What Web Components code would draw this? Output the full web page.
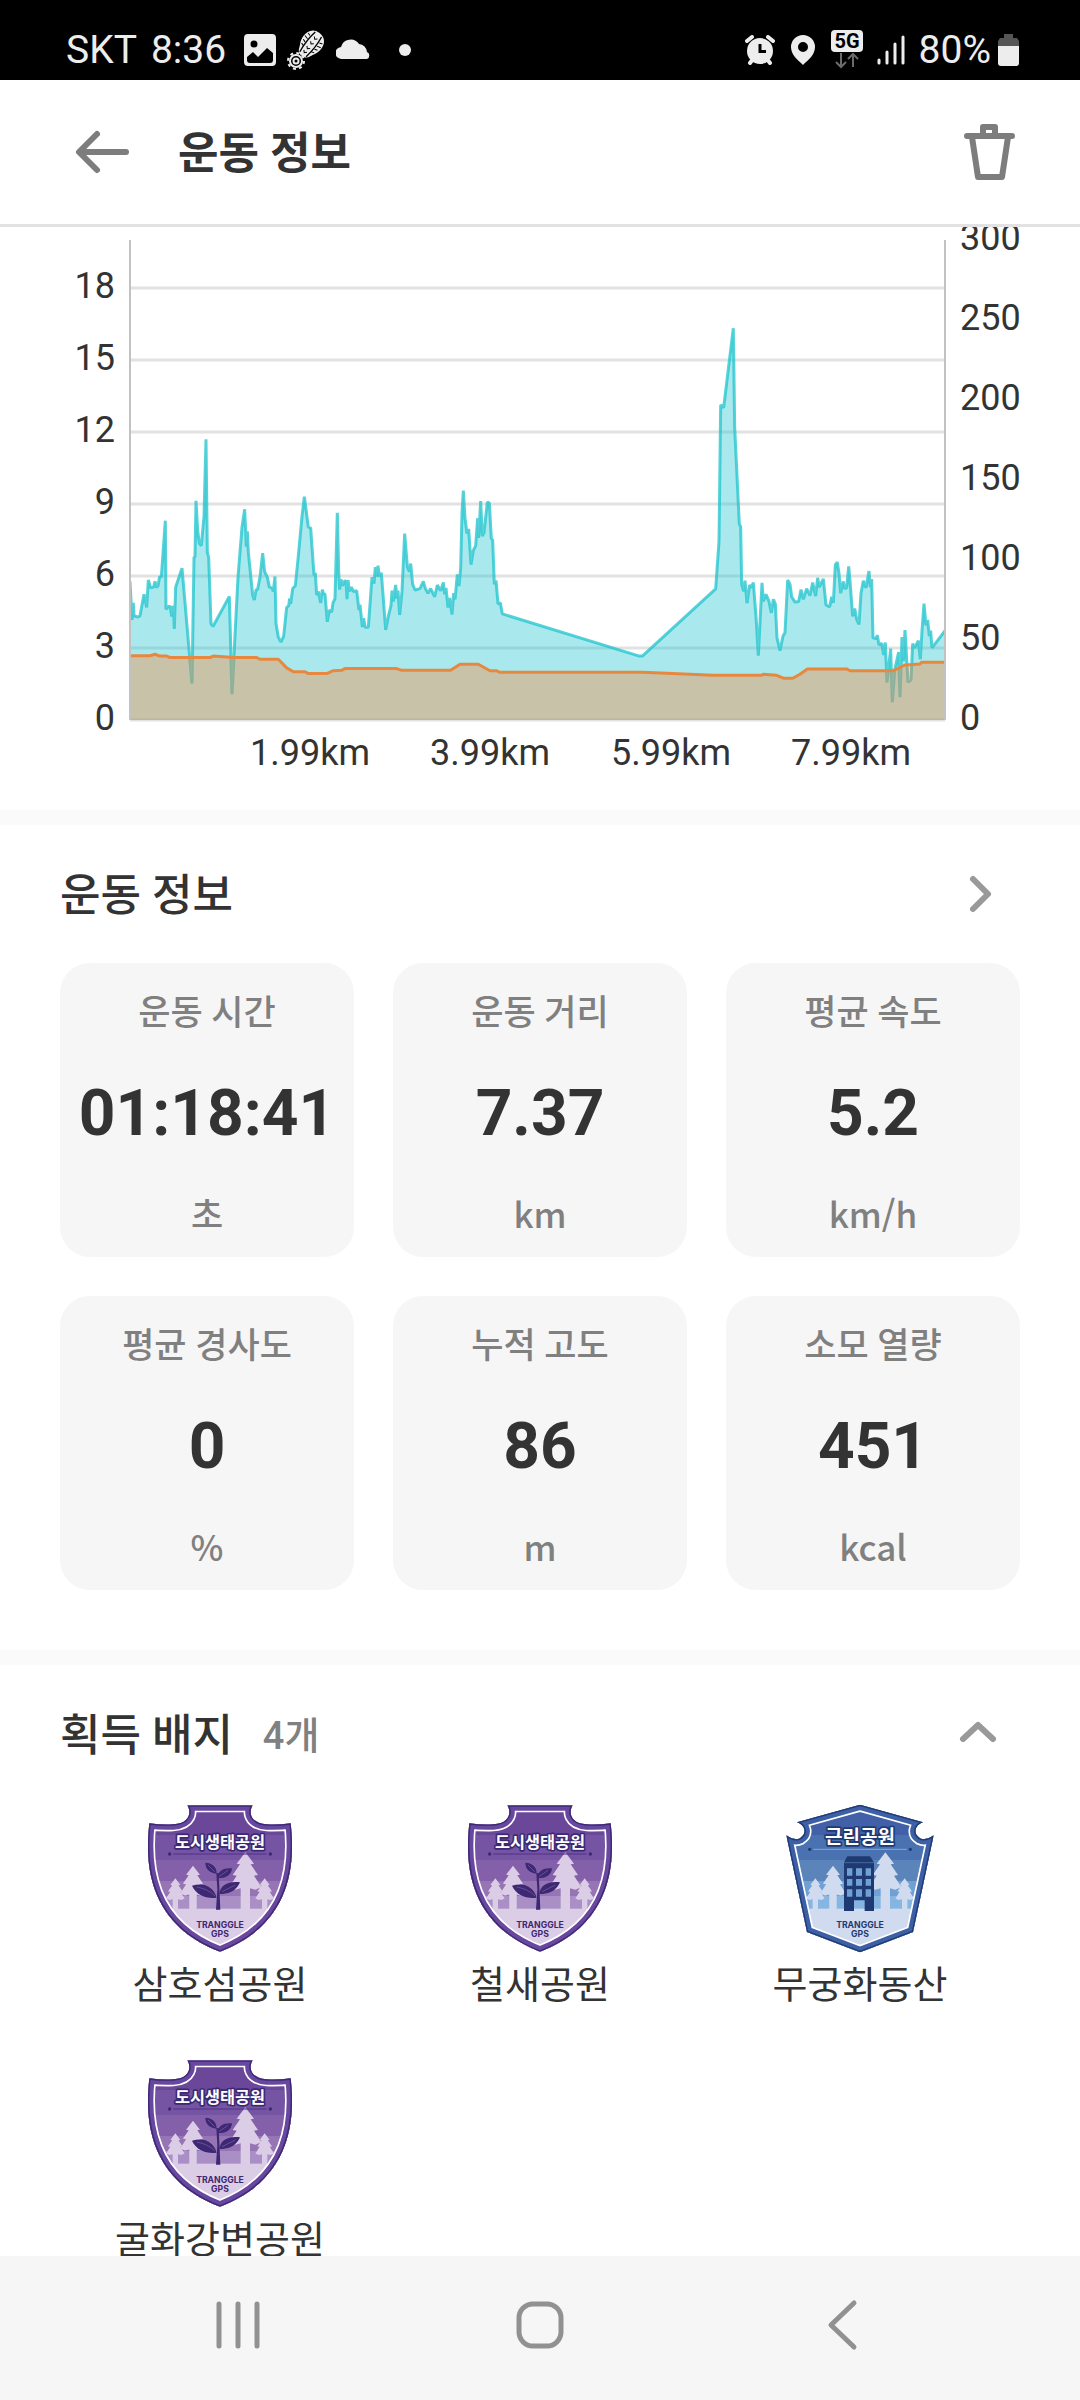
<!DOCTYPE html>
<html lang="ko">
<head>
<meta charset="utf-8">
<meta name="viewport" content="width=device-width, initial-scale=1">
<title>운동 정보</title>
<style>
    :root {
        --ink: #333;
        --muted: #808080;
        --panel: #f6f6f6;
        --divider: #fafafa;
        --line: #e2e2e2;
        --gutter: 60px;
    }
    body {
        margin: 0;
        background: white;
        color: var(--ink);
        font-family: Roboto, "Noto Sans CJK KR", sans-serif;
    }
</style>
</head>
<body>
<app-screen>
    <status-bar slot="top" carrier="SKT" time="8:36" battery="80"></status-bar>
    <title-bar slot="top">운동 정보</title-bar>

    <workout-chart></workout-chart>

    <info-section>
        <span slot="title">운동 정보</span>
        <icon-button slot="action" name="next" label="운동 정보 더보기"></icon-button>
        <stat-grid>
            <stat-card label="운동 시간" unit="초">01:18:41</stat-card>
            <stat-card label="운동 거리" unit="km">7.37</stat-card>
            <stat-card label="평균 속도" unit="km/h">5.2</stat-card>
            <stat-card label="평균 경사도" unit="%">0</stat-card>
            <stat-card label="누적 고도" unit="m">86</stat-card>
            <stat-card label="소모 열량" unit="kcal">451</stat-card>
        </stat-grid>
    </info-section>

    <info-section>
        <span slot="title">획득 배지</span>
        <span slot="count">4개</span>
        <icon-button slot="action" name="fold" label="획득 배지 접기"></icon-button>
        <badge-list>
            <park-badge type="eco">삼호섬공원</park-badge>
            <park-badge type="eco">철새공원</park-badge>
            <park-badge type="town">무궁화동산</park-badge>
            <park-badge type="eco">굴화강변공원</park-badge>
        </badge-list>
    </info-section>

    <nav-bar slot="bottom"></nav-bar>
</app-screen>

<script>
class AppScreen extends HTMLElement {
    constructor() {
        super();

        this.attachShadow({mode: 'open'}).innerHTML = `
            <style>
                :host {
                    display: flex;
                    flex-direction: column;
                    height: 100vh;
                }
                header, footer {
                    flex: none;
                }
                main {
                    flex: 1;
                    min-height: 0;
                    overflow: hidden;
                }
            </style>
            <header><slot name="top"></slot></header>
            <main><slot></slot></main>
            <footer><slot name="bottom"></slot></footer>
        `;
    }
}

class StatusBar extends HTMLElement {
    constructor() {
        super();

        this.attachShadow({mode: 'open'}).innerHTML = `
            <style>
                :host {
                    display: flex;
                    justify-content: space-between;
                    box-sizing: border-box;
                    height: 80px;
                    padding: 20px 61px 0 66px;
                    background: black;
                    color: #ededed;
                    font-size: 39px;
                    line-height: 60px;
                }
                div {
                    display: flex;
                    align-items: center;
                }
                svg {
                    display: block;
                    fill: #ededed;
                }
                .time {
                    margin: 0 18px 0 14px;
                }
                .left svg + svg {
                    margin-left: 11px;
                }
                .left svg:last-child {
                    margin-left: 27px;
                }
                .right svg {
                    margin-right: 14px;
                }
                .right svg:last-child {
                    margin: 0 0 0 7px;
                }
            </style>
            <div class="left">
                <span>${this.getAttribute('carrier')}</span>
                <span class="time">${this.getAttribute('time')}</span>
                <svg width="32" height="32" viewBox="0 0 32 32">
                    <path fill-rule="evenodd" d="M4 0h24a4 4 0 0 1 4 4v24a4 4 0 0 1-4 4H4a4 4 0 0 1-4-4V4a4 4 0 0 1 4-4zM3 23v3a3 3 0 0 0 3 3h20a3 3 0 0 0 3-3v-7l-6-5-9 9-5-5zM10 6.500a3.500 3.500 0 1 0 0 7 3.500 3.500 0 0 0 0-7z"/>
                </svg>
                <svg width="38" height="40" viewBox="0 0 38 40">
                    <g transform="rotate(38 24 14)">
                        <path d="M24 0c8 0 11 6 11 12s-3 9-4 12-3 5-7 5-6-2-7-5-4-6-4-12 3-12 11-12z"/>
                        <path d="M20 2q-2 12 0 25M28 2q2 12 0 25" fill="none" stroke="#000" stroke-width="1.400"/>
                        <path d="M15 7l3 1M14 11l4 1M15 15l3 1M16 19l3 1M33 7l-3 1M34 11l-4 1M33 15l-3 1M32 19l-3 1M22 6l2 2 2-2M22 12l2 2 2-2M22 18l2 2 2-2M22 23l2 2 2-2" fill="none" stroke="#000"/>
                    </g>
                    <circle cx="9" cy="31" r="6" fill="none" stroke="#ededed" stroke-width="2"/>
                    <circle cx="9" cy="31" r="8" fill="none" stroke="#ededed" stroke-width="2" stroke-dasharray="3 3.300"/>
                    <circle cx="9" cy="31" r="2.500" fill="none" stroke="#ededed" stroke-width="2"/>
                </svg>
                <svg width="36" height="32" viewBox="0 0 36 32">
                    <path d="M6 25a6 6 0 0 1-1-12 10 10 0 0 1 18-3 8.500 8.500 0 0 1 8 8 3.800 3.800 0 0 1 0 7z"/>
                </svg>
                <svg width="12" height="12" viewBox="0 0 12 12"><circle cx="6" cy="6" r="6"/></svg>
            </div>
            <div class="right">
                <svg width="30" height="30" viewBox="0 0 30 30">
                    <circle cx="15" cy="16" r="13"/>
                    <path d="M2 6l5-4M28 6l-5-4M5 28l3-4M25 28l-3-4" stroke="#ededed" stroke-width="4" stroke-linecap="round"/>
                    <path d="M15 9v7.500h6" fill="none" stroke="#000" stroke-width="3"/>
                </svg>
                <svg width="28" height="30" viewBox="0 0 28 30">
                    <path fill-rule="evenodd" d="M14 0a12 12 0 0 1 12 12c0 8-7 13-12 18C9 25 2 20 2 12A12 12 0 0 1 14 0zM14 7a5 5 0 1 0 0 10 5 5 0 0 0 0-10z"/>
                </svg>
                <svg width="32" height="40" viewBox="0 0 32 40">
                    <rect width="32" height="22" rx="4"/>
                    <text x="16" y="18" text-anchor="middle" font-size="20" font-weight="700" fill="#000">5G</text>
                    <path d="M10 23v14M5 32l5 5 5-5M22 37V24M17 29l5-5 5 5" fill="none" stroke="#6b6b6b" stroke-width="2"/>
                </svg>
                <svg width="28" height="30" viewBox="0 0 28 30">
                    <path d="M2 25v3M10 17v11M18 9v19M26 2v26" stroke="#ededed" stroke-width="3" stroke-linecap="round"/>
                </svg>
                <span>${this.getAttribute('battery')}%</span>
                <svg width="21" height="32" viewBox="0 0 21 32">
                    <path d="M6 0h9v4h4l2 3v6H0V7l2-3h4z" fill="#555"/>
                    <path d="M0 12h21v17a3 3 0 0 1-3 3H3a3 3 0 0 1-3-3z"/>
                </svg>
            </div>
        `;
    }
}

class TitleBar extends HTMLElement {
    constructor() {
        super();

        this.attachShadow({mode: 'open'}).innerHTML = `
            <style>
                :host {
                    display: flex;
                    align-items: center;
                    height: 144px;
                    padding: 0 var(--gutter);
                    border-bottom: 3px solid var(--line);
                }
                h1 {
                    flex: 1;
                    margin: 0 0 0 34px;
                    padding-top: 4px;
                    font-size: 44px;
                    font-weight: 700;
                    line-height: 60px;
                }
            </style>
            <icon-button name="back" label="뒤로"></icon-button>
            <h1><slot></slot></h1>
            <icon-button name="trash" label="삭제"></icon-button>
        `;
    }
}

const ICONS = {
    back: {
        size: [84, 60],
        color: '#7d7d7d',
        draw: '<path d="M37 12L19 30l18 18M20 30h46" stroke-width="6"/>'
    },
    trash: {
        size: [60, 60],
        color: '#7d7d7d',
        draw: '<path d="M7 14h45M23 13V5h12v8M12 15l6 40h24l6-40" stroke-width="6"/>'
    },
    next: {
        size: [80, 60],
        color: '#999',
        draw: '<path d="M33 15l15 15-15 15" stroke-width="6"/>'
    },
    fold: {
        size: [84, 60],
        color: '#999',
        draw: '<path d="M27 35l15-14 15 14" stroke-width="6"/>'
    },
    recents: {
        size: [60, 60],
        color: '#919191',
        draw: '<path d="M11 9v42M30 9v42M49 9v42" stroke-width="5"/>'
    },
    home: {
        size: [60, 60],
        color: '#919191',
        draw: '<rect x="9" y="9" width="42" height="42" rx="14" stroke-width="5"/>'
    },
    previous: {
        size: [60, 60],
        color: '#919191',
        draw: '<path d="M42 8L19 30l23 22" stroke-width="5"/>'
    }
};

class IconButton extends HTMLElement {
    constructor() {
        super();

        const icon = ICONS[this.getAttribute('name')];
        const [width, height] = icon.size;

        this.attachShadow({mode: 'open'}).innerHTML = `
            <style>
                :host {
                    display: block;
                }
                button {
                    display: block;
                    padding: 0;
                    border: none;
                    background: none;
                    cursor: pointer;
                }
                svg {
                    display: block;
                    fill: none;
                    stroke: ${icon.color};
                    stroke-linecap: round;
                    stroke-linejoin: round;
                }
            </style>
            <button type="button" aria-label="${this.getAttribute('label')}">
                <svg width="${width}" height="${height}" viewBox="0 0 ${width} ${height}">${icon.draw}</svg>
            </button>
        `;
    }
}

// Plot units: 2445 wide, 1344 high, origin at the top left
const PLOT = {width: 2445, height: 1344};

const SPEED = `0,956 6,1064 10,1016 12,1052 24,1056 30,1052 42,992 50,1029 55,952 62,974 71,972 75,956 79,972 84,969
    89,942 94,944 100,864 106,786 108,1034 115,1026 121,1026 125,1054 130,1024 133,1089 137,972 156,919 186,1242
    192,889 195,887 198,730 203,814 208,849 214,856 222,774 228,558 232,874 236,889 243,1074 249,1082 298,998
    306,1272 324,944 336,804 344,754 349,859 352,816 355,874 368,994 373,1008 378,980 383,978 390,944 398,877
    404,929 412,944 418,972 426,974 430,984 435,942 438,1074 445,1112 453,1126 461,1109 470,1029 476,1024 479,1004
    482,1019 488,976 496,968 504,894 516,774 523,719 535,804 542,806 552,939 556,932 560,994 565,984 572,1016
    577,979 580,989 585,992 592,1069 598,1036 605,1042 609,1016 615,1004 622,764 626,929 629,979 633,950 638,968
    643,956 648,954 651,1006 654,952 658,984 664,972 670,984 680,982 687,1036 690,1021 697,1084 701,1059 705,1084
    715,1084 726,944 732,962 736,916 740,942 744,912 748,942 754,932 760,1004 767,1092 775,1054 783,1024 786,982
    790,1012 797,966 801,1004 804,982 809,1050 816,984 824,822 832,914 838,929 842,906 848,964 855,980 870,976
    880,956 886,976 894,989 902,976 914,999 922,966 932,982 940,959 944,992 948,974 954,1029 959,1002 966,1049
    971,989 975,1006 982,936 987,969 992,919 996,764 1000,702 1005,779 1011,822 1016,809 1023,909 1030,869
    1037,856 1043,779 1046,834 1052,731 1057,829 1062,819 1072,734 1078,736 1084,836 1088,840 1093,964 1098,954
    1104,1019 1111,1016 1117,1047 1528,1165 1537,1165 1757,977 1767,844 1772,462 1781,469 1810,247 1814,524
    1828,796 1832,802 1835,964 1841,984 1845,954 1851,1017 1859,966 1864,974 1870,959 1878,1054 1885,1164 1896,960
    1900,1012 1908,992 1917,1012 1924,1044 1930,1006 1936,1019 1941,1114 1950,1150 1959,1109 1965,1099 1973,952
    1980,964 1985,999 1995,1014 2006,1012 2013,979 2020,1006 2030,976 2040,996 2048,959 2057,997 2063,946 2068,972
    2080,949 2088,1022 2099,1027 2105,999 2110,1016 2116,909 2122,902 2127,934 2132,989 2140,956 2144,976 2150,974
    2156,914 2160,954 2168,1054 2174,1032 2180,1062 2187,1076 2193,989 2200,954 2208,974 2217,927 2221,972
    2225,949 2229,1114 2238,1116 2242,1107 2247,1134 2255,1129 2261,1162 2266,1127 2271,1239 2282,1144 2287,1294
    2294,1204 2300,1179 2306,1154 2310,1280 2316,1112 2320,1179 2325,1092 2334,1238 2343,1232 2348,1130 2354,1142
    2365,1122 2371,1174 2376,1094 2382,1018 2388,1079 2393,1064 2398,1109 2402,1094 2406,1142 2445,1094`;

const ALTITUDE = `0,1164 60,1164 75,1160 90,1165 110,1165 120,1169 240,1169 250,1165 310,1169 380,1169 390,1174
    445,1174 470,1198 490,1209 525,1209 535,1214 590,1214 610,1206 635,1205 645,1200 800,1200 815,1205 962,1205
    990,1188 1045,1188 1080,1206 1100,1206 1108,1210 1540,1210 1750,1219 1895,1219 1900,1216 1940,1219 1960,1227
    1988,1227 2010,1216 2032,1201 2150,1201 2160,1206 2290,1206 2325,1190 2370,1187 2375,1182 2445,1182`;

class WorkoutChart extends HTMLElement {
    constructor() {
        super();

        const left = 130;
        const right = 945;
        const top = 13;
        const bottom = 493;
        const y = (value, max) => Math.round(bottom - (bottom - top) * value / max);

        const speeds = [0, 3, 6, 9, 12, 15, 18];
        const heights = [0, 50, 100, 150, 200, 250, 300];
        const distances = [[310, '1.99km'], [490, '3.99km'], [671, '5.99km'], [851, '7.99km']];

        const area = points => `0,${PLOT.height} ${points} ${PLOT.width},${PLOT.height}`;

        this.attachShadow({mode: 'open'}).innerHTML = `
            <style>
                :host {
                    display: block;
                }
                .chart {
                    display: block;
                    width: 100%;
                    height: auto;
                }
                text {
                    fill: var(--ink);
                    font-size: 36px;
                }
                .grid {
                    stroke: var(--line);
                    stroke-width: 3;
                }
                .axis {
                    stroke: #c2c2c2;
                    stroke-width: 2;
                }
                polyline {
                    fill: none;
                    stroke-width: 3;
                    stroke-linejoin: bevel;
                    vector-effect: non-scaling-stroke;
                }
                .end {
                    text-anchor: end;
                }
                .middle {
                    text-anchor: middle;
                }
            </style>
            <svg class="chart" viewBox="0 0 1080 583" role="img" aria-label="속도 고도 그래프">
                ${speeds.map(v => `<path class="grid" d="M${left} ${y(v, 20)}H${right}"/>`).join('')}
                <svg x="${left}" y="${top}" width="${right - left}" height="${bottom - top}" viewBox="0 0 ${PLOT.width} ${PLOT.height}" preserveAspectRatio="none">
                    <polygon points="${area(SPEED)}" fill="#27c8d2" fill-opacity=".4"/>
                    <polyline points="${SPEED}" stroke="#1fc3cc" stroke-opacity=".75"/>
                    <polygon points="${area(ALTITUDE)}" fill="#f68841" fill-opacity=".4"/>
                    <polyline points="${ALTITUDE}" stroke="#e8883f"/>
                </svg>
                <path class="axis" d="M${left} ${top}V${bottom}M${right} ${top}V${bottom}"/>
                ${speeds.map(v => `<text class="end" x="115" y="${y(v, 20) + 10}">${v}</text>`).join('')}
                ${heights.map(v => `<text x="960" y="${y(v, 300) + 10}">${v}</text>`).join('')}
                ${distances.map(([x, text]) => `<text class="middle" x="${x}" y="538">${text}</text>`).join('')}
            </svg>
        `;
    }
}

class InfoSection extends HTMLElement {
    constructor() {
        super();

        this.attachShadow({mode: 'open'}).innerHTML = `
            <style>
                :host {
                    display: block;
                    padding: 0 var(--gutter) 60px;
                    border-top: 15px solid var(--divider);
                }
                header {
                    display: flex;
                    align-items: center;
                    height: 138px;
                }
                h2 {
                    margin: 0;
                    padding-top: 4px;
                    font-size: 44px;
                    font-weight: 500;
                    line-height: 60px;
                }
                p {
                    flex: 1;
                    margin: 0 0 0 30px;
                    padding-top: 4px;
                    color: var(--muted);
                    font-size: 38px;
                    font-weight: 500;
                    line-height: 60px;
                }
            </style>
            <header>
                <h2><slot name="title"></slot></h2>
                <p><slot name="count"></slot></p>
                <slot name="action"></slot>
            </header>
            <slot></slot>
        `;
    }
}

class StatGrid extends HTMLElement {
    constructor() {
        super();

        this.attachShadow({mode: 'open'}).innerHTML = `
            <style>
                :host {
                    display: grid;
                    grid-template-columns: repeat(3, 1fr);
                    gap: 39px;
                }
            </style>
            <slot></slot>
        `;
    }
}

class StatCard extends HTMLElement {
    constructor() {
        super();

        this.attachShadow({mode: 'open'}).innerHTML = `
            <style>
                :host {
                    display: flex;
                    flex-direction: column;
                    justify-content: space-between;
                    box-sizing: border-box;
                    aspect-ratio: 1;
                    padding: 26px 0 19px;
                    border-radius: 30px;
                    background: var(--panel);
                    text-align: center;
                }
                .label, .unit {
                    color: var(--muted);
                    font-size: 35px;
                    font-weight: 500;
                    line-height: 50px;
                }
                .unit {
                    font-family: "Noto Sans CJK KR", sans-serif;
                }
                .value {
                    font-size: 64px;
                    font-weight: 700;
                    line-height: 100px;
                }
            </style>
            <span class="label">${this.getAttribute('label')}</span>
            <span class="value"><slot></slot></span>
            <span class="unit">${this.getAttribute('unit')}</span>
        `;
    }
}

class BadgeList extends HTMLElement {
    constructor() {
        super();

        this.attachShadow({mode: 'open'}).innerHTML = `
            <style>
                :host {
                    display: grid;
                    grid-template-columns: repeat(3, 1fr);
                    row-gap: 47px;
                }
            </style>
            <slot></slot>
        `;
    }
}

const BADGES = {
    eco: {
        name: '도시생태공원',
        shape: 'M202 73H398C386 92 388 126 440 130Q475 132 512 127C526 250 515 430 300 512C85 430 74 250 88 127Q125 132 160 130C212 126 214 92 202 73Z',
        bands: ['#6a4799', '#7654a4', '#8560aa', '#9775b5', '#a98fc6'],
        light: '#dccde6',
        edge: '#6847a0',
        dark: '#3c2873',
        rule: '#4c3186',
        textSize: 49,
        textY: 200,
        ruleY: 219,
        art: `
            <path d="M288 386l4-60-3-50h7l2 42 3 68z"/>
            <path d="M290 278c-22-3-34-14-34-33 20 0 34 12 34 33z"/>
            <path d="M292 290c2-20 18-30 44-28-2 20-18 32-44 28z"/>
            <path d="M290 350c-10-32-36-46-74-36 12 28 44 40 74 36z"/>
            <path d="M298 338c4-26 26-38 62-34-10 24-34 38-62 34z"/>
            <path d="M230 318q34 6 54 26M306 332q20-10 40-20M264 252l20 20M298 286l26-18" fill="none" stroke="#8560aa" stroke-width="2"/>`
    },
    town: {
        name: '근린공원',
        shape: 'M300 71L489 124C464 132 458 158 480 172Q496 180 521 163L459 453L300 514L141 453L79 163Q104 180 120 172C142 158 136 132 111 124Z',
        bands: ['#4160a7', '#4a72b1', '#5b85ba', '#70a1d4', '#86b5e1'],
        light: '#d0dbef',
        edge: '#3c5fa6',
        dark: '#1f3a72',
        rule: '#75b0e4',
        textSize: 57,
        textY: 188,
        ruleY: 205,
        art: `
            <path d="M262 226h68l12 18v146h-28v-32h-32v32h-30V244z"/>
            <path d="M252 245h90" stroke="#5b85ba" stroke-width="2"/>
            <path d="M261 262h16v22h-16zM288 262h18v22h-18zM317 262h16v22h-16zM261 294h16v20h-16zM288 294h18v20h-18zM317 294h16v20h-16zM261 325h16v22h-16zM288 325h18v22h-18zM317 325h16v22h-16z" fill="#70a1d4"/>`
    }
};

// Pine tree with its tip at 0,0
const TREE = 'M0 0L26 34L16 36L38 68L26 70L48 104L30 112L14 108V170H-14V108L-30 112L-48 104L-26 70L-38 68L-16 36L-26 34Z';

class ParkBadge extends HTMLElement {
    constructor() {
        super();

        const badge = BADGES[this.getAttribute('type')];
        const [b1, b2, b3, b4, b5] = badge.bands;

        this.attachShadow({mode: 'open'}).innerHTML = `
            <style>
                :host {
                    display: flex;
                    flex-direction: column;
                    align-items: center;
                    gap: 6px;
                    font-size: 38px;
                    line-height: 52px;
                }
                svg {
                    display: block;
                }
                text {
                    text-anchor: middle;
                    font-weight: 700;
                }
                .name {
                    fill: white;
                    stroke: ${badge.dark};
                    stroke-width: 10;
                    stroke-linejoin: round;
                    paint-order: stroke;
                    font-family: "Noto Sans CJK KR", sans-serif;
                    font-size: ${badge.textSize}px;
                }
                .brand {
                    fill: ${badge.dark};
                    font-family: Inter, sans-serif;
                    font-size: 26px;
                }
            </style>
            <svg width="148" height="150" viewBox="78 66 444 450" aria-hidden="true">
                <clipPath id="shape"><path d="${badge.shape}"/></clipPath>
                <g clip-path="url(#shape)">
                    <rect x="70" y="60" width="460" height="460" fill="${b1}"/>
                    <rect x="70" y="162" width="460" height="360" fill="${b2}"/>
                    <rect x="70" y="237" width="460" height="300" fill="${b3}"/>
                    <rect x="70" y="300" width="460" height="220" fill="${b4}"/>
                    <rect x="70" y="345" width="460" height="180" fill="${b5}"/>
                    <rect x="70" y="383" width="460" height="140" fill="${badge.light}"/>
                    <g fill="${badge.light}">
                        <path d="${TREE}" transform="translate(376 214)"/>
                        <path d="${TREE}" transform="translate(219 254) scale(.8)"/>
                        <path d="${TREE}" transform="translate(166 292) scale(.58)"/>
                        <path d="${TREE}" transform="translate(434 292) scale(.58)"/>
                    </g>
                    <path d="${badge.shape}" fill="none" stroke="white" stroke-width="42"/>
                    <path d="${badge.shape}" fill="none" stroke="${badge.edge}" stroke-width="32"/>
                    <path d="${badge.shape}" fill="none" stroke="${badge.dark}" stroke-width="8"/>
                </g>
                <path d="M160 ${badge.ruleY}H440" stroke="${badge.rule}" stroke-width="3"/>
                <g fill="${badge.dark}">
                    <circle cx="149" cy="${badge.ruleY}" r="5"/>
                    <circle cx="451" cy="${badge.ruleY}" r="5"/>
                    ${badge.art}
                </g>
                <text class="name" x="300" y="${badge.textY}">${badge.name}</text>
                <text class="brand" x="300" y="442">TRANGGLE</text>
                <text class="brand" x="300" y="469">GPS</text>
            </svg>
            <span><slot></slot></span>
        `;
    }
}

class NavBar extends HTMLElement {
    constructor() {
        super();

        this.attachShadow({mode: 'open'}).innerHTML = `
            <style>
                :host {
                    display: block;
                }
                nav {
                    display: flex;
                    align-items: center;
                    justify-content: space-around;
                    box-sizing: border-box;
                    height: 144px;
                    padding: 0 87px 6px;
                    background: #f6f6f6;
                }
            </style>
            <nav>
                <icon-button name="recents" label="최근 앱"></icon-button>
                <icon-button name="home" label="홈"></icon-button>
                <icon-button name="previous" label="이전"></icon-button>
            </nav>
        `;
    }
}

customElements.define('app-screen', AppScreen);
customElements.define('icon-button', IconButton);
customElements.define('status-bar', StatusBar);
customElements.define('title-bar', TitleBar);
customElements.define('workout-chart', WorkoutChart);
customElements.define('info-section', InfoSection);
customElements.define('stat-grid', StatGrid);
customElements.define('stat-card', StatCard);
customElements.define('badge-list', BadgeList);
customElements.define('park-badge', ParkBadge);
customElements.define('nav-bar', NavBar);
</script>
</body>
</html>
